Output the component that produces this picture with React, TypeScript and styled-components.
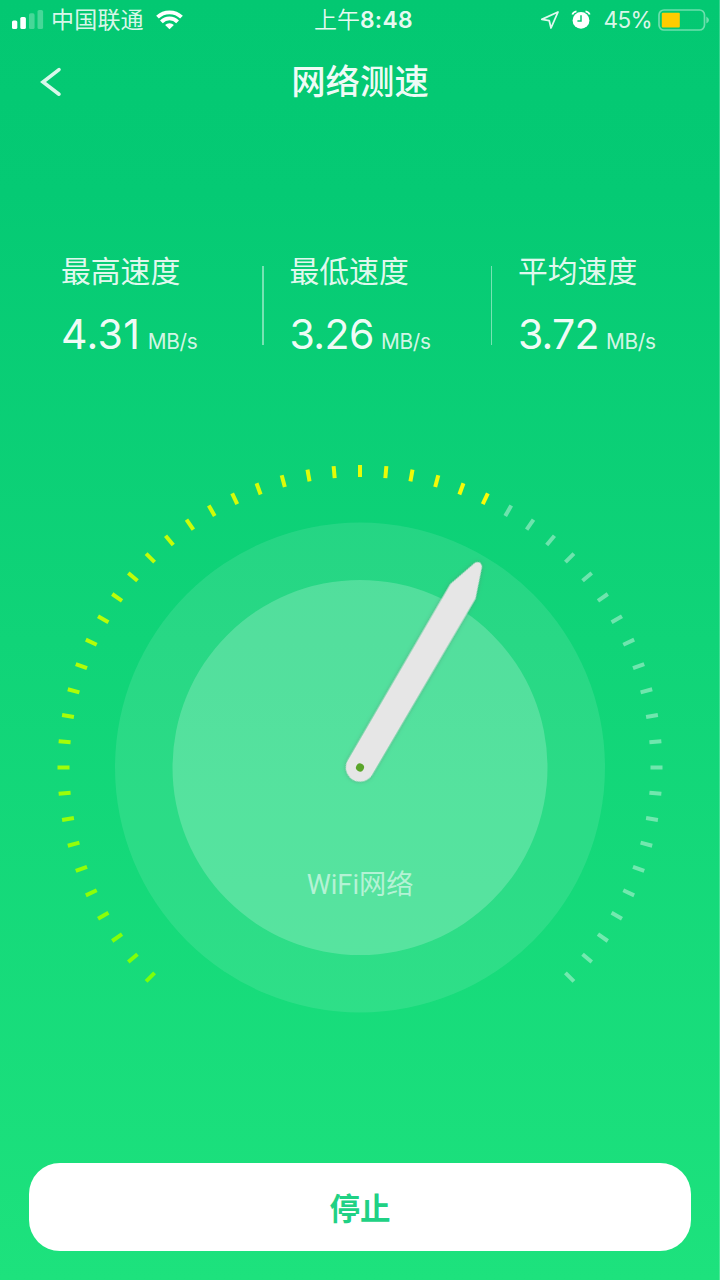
import React from "react";
import styled, { createGlobalStyle } from "styled-components";

const GlobalStyle = createGlobalStyle`
  * { box-sizing: border-box; }
  body { margin: 0; }
`;

const Screen = styled.div`
  width: 720px;
  height: 1280px;
  overflow: hidden;
  display: flex;
  flex-direction: column;
  color: #fff;
  font-family: Inter, "Noto Sans CJK SC", sans-serif;
  background: linear-gradient(180deg, #03c872 0%, #05ca74 15%, #10d478 50%, #1de27d 100%);
  box-shadow: inset -1px 0 0 rgba(255, 255, 255, 0.22);
`;

const StatusBar = styled.header`
  height: 40px;
  padding: 0 11px 0 12px;
  display: grid;
  grid-template-columns: 1fr auto 1fr;
  align-items: center;
  font-size: 23px;
  line-height: 40px;
  white-space: nowrap;
`;

const StatusGroup = styled.div<{ $end?: boolean }>`
  display: flex;
  align-items: center;
  justify-content: ${(p) => (p.$end ? "flex-end" : "flex-start")};
  color: rgba(255, 255, 255, 0.87);
`;

const Signal = styled.svg`
  flex: none;
  margin-right: 7px;
`;

const WifiIcon = styled.svg`
  flex: none;
  margin-left: 12.5px;
`;

const Clock = styled.div`
  font-weight: 350;
  color: rgba(255, 255, 255, 0.92);
  padding-left: 6px;
`;

const ClockDigits = styled.span`
  font-weight: 600;
  font-size: 22.8px;
  letter-spacing: 0.4px;
`;

const Carrier = styled.span`
  font-weight: 400;
  letter-spacing: 0.2px;
`;

const Percent = styled.span`
  font-size: 22.5px;
  letter-spacing: -0.6px;
  margin: 0 6px 0 12.5px;
`;

const StatusIcon = styled.svg<{ $gap?: number }>`
  flex: none;
  margin-left: ${(p) => p.$gap ?? 0}px;
`;

const NavBar = styled.nav`
  height: 84px;
  display: grid;
  grid-template-columns: 100px 1fr 100px;
  align-items: center;
`;

const BackButton = styled.button`
  width: 40px;
  height: 44px;
  margin-left: 31px;
  padding: 0;
  border: 0;
  background: none;
  display: flex;
  align-items: center;
  justify-content: center;
`;

const Title = styled.h1`
  margin: 0;
  text-align: center;
  font-size: 34.4px;
  line-height: 50px;
  font-weight: 500;
  color: rgba(255, 255, 255, 0.95);
`;

const Stats = styled.section`
  margin-top: 124px;
  height: 120px;
  padding-left: 61px;
  display: grid;
  grid-template-columns: 228.5px 228.5px 1fr;
`;

const Stat = styled.div`
  display: flex;
  align-items: center;
`;

const StatBody = styled.div`
  flex: 1;
  align-self: flex-start;
`;

const StatLabel = styled.div`
  height: 46px;
  font-size: 29.8px;
  line-height: 46px;
  font-weight: 400;
  color: rgba(255, 255, 255, 0.9);
`;

const StatValue = styled.div`
  display: flex;
  align-items: baseline;
  margin-top: 12px;
  font-size: 41px;
  line-height: 56px;
  font-weight: 400;
  white-space: nowrap;
  color: rgba(255, 255, 255, 0.96);
`;

const Figure = styled.span<{ $tracking: number }>`
  letter-spacing: ${(p) => p.$tracking}px;
`;

const Unit = styled.span`
  margin-left: 7.3px;
  font-size: 20.8px;
  letter-spacing: -0.3px;
  color: rgba(255, 255, 255, 0.84);
`;

const Divider = styled.i`
  width: 1.5px;
  height: 79px;
  margin: 0 26px 7px 0;
  background: rgba(255, 255, 255, 0.45);
`;

const Gauge = styled.section`
  display: grid;
  width: 720px;
  height: 640px;
  margin-top: 70px;
`;

const Dial = styled.svg`
  grid-area: 1 / 1;
`;

const Network = styled.div`
  grid-area: 1 / 1;
  justify-self: center;
  align-self: end;
  margin-bottom: 173px;
  font-size: 27.2px;
  line-height: 40px;
  font-family: Roboto, "Noto Sans CJK SC", sans-serif;
  font-weight: 400;
  color: rgba(255, 255, 255, 0.56);
`;

const Footer = styled.footer`
  margin-top: auto;
  padding: 0 29px 29px;
`;

const StopButton = styled.button`
  display: block;
  width: 100%;
  height: 88px;
  padding: 0 0 1px;
  border: 0;
  border-radius: 31px;
  background: #fff;
  color: #20d184;
  font-family: "Noto Sans CJK SC", sans-serif;
  font-size: 30.5px;
  font-weight: 700;
`;

const stats = [
  { label: "最高速度", value: "4.31", tracking: 0.4 },
  { label: "最低速度", value: "3.26", tracking: -0.6 },
  { label: "平均速度", value: "3.72", tracking: -0.8 },
];

const CX = 360;
const CY = 329.5;
const ticks = Array.from({ length: 55 }, (_, i) => -135 + i * 5);

function tickColor(angle: number) {
  if (angle > 25) return "rgba(255,255,255,0.4)";
  const t = (angle + 135) / 160;
  return `rgb(${Math.round(125 + t * 125)}, ${Math.round(255 - t * 5)}, 8)`;
}

export default function App() {
  return (
    <Screen>
      <GlobalStyle />
      <StatusBar>
        <StatusGroup>
          <Signal width="32" height="20" viewBox="0 0 32 20" fill="#fff">
            <rect x="0" y="10.5" width="5.3" height="8.5" rx="1.6" />
            <rect x="8.3" y="7" width="5.6" height="12" rx="1.6" />
            <rect x="17" y="3.3" width="5.6" height="15.7" rx="1.6" opacity="0.27" />
            <rect x="25.5" y="0" width="5.6" height="19" rx="1.6" opacity="0.27" />
          </Signal>
          <Carrier>中国联通</Carrier>
          <WifiIcon width="27" height="20" viewBox="0 0 27 20" fill="none" stroke="#fff" strokeWidth="3.9">
            <path d="M1.5 7.2A17.4 17.4 0 0 1 25.5 7.2" />
            <path d="M5.4 11.8A11.4 11.4 0 0 1 21.6 11.8" />
            <path d="M13.5 19.2L9.1 15.1A6.2 6.2 0 0 1 17.9 15.1Z" fill="#fff" stroke="none" />
          </WifiIcon>
        </StatusGroup>
        <Clock>
          上午<ClockDigits>8:48</ClockDigits>
        </Clock>
        <StatusGroup $end>
          <StatusIcon width="20" height="20" viewBox="0 0 20 20" fill="none" stroke="rgba(255,255,255,.88)" strokeWidth="1.8" strokeLinejoin="round">
            <path d="M18 2L1.8 9.4L9.2 10.6L11 18Z" />
          </StatusIcon>
          <StatusIcon $gap={11} width="20" height="20" viewBox="0 0 20 20">
            <circle cx="10" cy="10.4" r="8.4" fill="#fff" />
            <path d="M1.3 4.5Q2.5 1.7 5.5 1.3M18.7 4.5Q17.5 1.7 14.5 1.3" fill="none" stroke="#fff" strokeWidth="1.8" />
            <path d="M10 5.2V10.9H6.4" fill="none" stroke="#05c974" strokeWidth="1.5" />
          </StatusIcon>
          <Percent>45%</Percent>
          <StatusIcon width="51" height="22" viewBox="0 0 51 22">
            <rect x="1" y="1" width="45.5" height="20" rx="5" fill="none" stroke="#fff" strokeOpacity="0.42" strokeWidth="1.7" />
            <rect x="3.8" y="3.8" width="18" height="14.6" rx="1" fill="#ffcc00" />
            <path d="M48.3 7.5Q51 9 51 11T48.3 14.5Z" fill="#fff" opacity="0.42" />
          </StatusIcon>
        </StatusGroup>
      </StatusBar>

      <NavBar>
        <BackButton aria-label="返回">
          <svg width="22" height="30" viewBox="0 0 22 30" fill="none" stroke="#fff" strokeOpacity="0.85" strokeWidth="3.6" strokeLinecap="round">
            <path d="M19 2.6L3 15L19 27.2" />
          </svg>
        </BackButton>
        <Title>网络测速</Title>
      </NavBar>

      <Stats>
        {stats.map((s, i) => (
          <Stat key={s.label}>
            <StatBody>
              <StatLabel>{s.label}</StatLabel>
              <StatValue>
                <Figure $tracking={s.tracking}>{s.value}</Figure>
                <Unit>MB/s</Unit>
              </StatValue>
            </StatBody>
            {i < 2 && <Divider />}
          </Stat>
        ))}
      </Stats>

      <Gauge>
        <Dial width="720" height="640" viewBox="0 0 720 640">
          <defs>
            <filter id="needleShadow" x="-30%" y="-10%" width="160%" height="120%">
              <feDropShadow dx="0" dy="0" stdDeviation="2" floodColor="#4b8f70" floodOpacity="0.6" />
            </filter>
          </defs>
          <circle cx={CX} cy={CY} r="245" fill="#fff" fillOpacity="0.1" />
          <circle cx={CX} cy={CY} r="187.5" fill="#fff" fillOpacity="0.2" />
          {ticks.map((a) => (
            <rect key={a} x={CX - 2} y={CY - 302.5} width="4" height="12" fill={tickColor(a)} transform={`rotate(${a} ${CX} ${CY})`} />
          ))}
          <g transform={`translate(${CX} ${CY}) rotate(30.3)`}>
            <path
              d="M-14.2 0L-14.6 -204L-4 -235Q0 -240 4 -235L14.6 -204L14.2 0A14.2 14.2 0 0 1 -14.2 0Z"
              fill="#e6e6e6"
              filter="url(#needleShadow)"
            />
            <circle r="4" fill="#5aa52a" />
          </g>
        </Dial>
        <Network>WiFi网络</Network>
      </Gauge>

      <Footer>
        <StopButton>停止</StopButton>
      </Footer>
    </Screen>
  );
}
